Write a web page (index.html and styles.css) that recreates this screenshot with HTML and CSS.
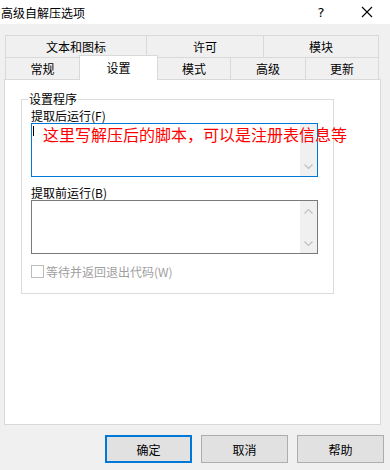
FILE: index.html
```html
<!DOCTYPE html>
<html lang="zh-CN">
<head>
    <meta charset="UTF-8">
    <title>高级自解压选项</title>
    <link rel="stylesheet" href="styles.css">
</head>
<body>
    <div class="titlebar">
        <span class="title">高级自解压选项</span>
        <span class="title-btn">?</span>
        <span class="title-btn">
            <svg width="12" height="12" viewBox="0 0 12 12">
                <path d="M1 1L11 11M11 1L1 11" stroke="#000" stroke-width="1.1" fill="none" />
            </svg>
        </span>
    </div>

    <div class="tabs">
        <div class="tab-row">
            <div class="tab w142">文本和图标</div>
            <div class="tab w118">许可</div>
            <div class="tab w116">模块</div>
        </div>
        <div class="tab-row">
            <div class="tab w75">常规</div>
            <div class="tab w79 active">设置</div>
            <div class="tab w74">模式</div>
            <div class="tab w76">高级</div>
            <div class="tab w74">更新</div>
        </div>
    </div>

    <div class="panel">
        <fieldset class="group">
            <legend>设置程序</legend>
            <div class="field-label">提取后运行(F)</div>
            <div class="textbox focused">
                <div class="text-area"><span class="caret"></span></div>
                <div class="scrollbar">
                    <svg width="9" height="5" viewBox="0 0 9 5"><path d="M0.5 4.5L4.5 0.5L8.5 4.5" stroke="#c2c2c2" stroke-width="1.2" fill="none" /></svg>
                    <svg width="9" height="5" viewBox="0 0 9 5"><path d="M0.5 0.5L4.5 4.5L8.5 0.5" stroke="#c2c2c2" stroke-width="1.2" fill="none" /></svg>
                </div>
                <span class="note">这里写解压后的脚本，可以是注册表信息等</span>
            </div>

            <div class="field-label second">提取前运行(B)</div>
            <div class="textbox">
                <div class="text-area"></div>
                <div class="scrollbar">
                    <svg width="9" height="5" viewBox="0 0 9 5"><path d="M0.5 4.5L4.5 0.5L8.5 4.5" stroke="#c2c2c2" stroke-width="1.2" fill="none" /></svg>
                    <svg width="9" height="5" viewBox="0 0 9 5"><path d="M0.5 0.5L4.5 4.5L8.5 0.5" stroke="#c2c2c2" stroke-width="1.2" fill="none" /></svg>
                </div>
            </div>

            <div class="check-row">
                <span class="checkbox"></span>
                <span class="check-label">等待并返回退出代码(W)</span>
            </div>
        </fieldset>
    </div>

    <footer>
        <button class="default">确定</button>
        <button>取消</button>
        <button>帮助</button>
    </footer>
</body>
</html>
```

FILE: styles.css
```css
* {
    box-sizing: border-box;
}

body {
    margin: 0;
    width: 390px;
    height: 470px;
    overflow: hidden;
    background-color: #f0f0f0;
    font-family: "Noto Sans CJK SC", sans-serif;
    font-size: 12px;
    color: #000;
}

.titlebar {
    display: flex;
    align-items: center;
    height: 24px;
    background-color: #fff;
}
.title {
    flex: 1;
    padding-left: 1px;
    font-size: 12px;
}
.title-btn {
    width: 46px;
    height: 24px;
    display: flex;
    justify-content: center;
    align-items: center;
    font-family: "DejaVu Sans", sans-serif;
    font-size: 13px;
}

.tabs {
    margin: 11px 0 0 5px;
}
.tab-row {
    display: flex;
    height: 22px;
}
.tab {
    height: 22px;
    margin-right: -1px;
    border: 1px solid #d9d9d9;
    border-bottom: none;
    background-color: #f0f0f0;
    display: flex;
    justify-content: center;
    align-items: center;
}
.tab.active {
    position: relative;
    z-index: 1;
    height: 25px;
    margin-top: -2px;
    padding-bottom: 2px;
    background-color: #fff;
}
.w142 { width: 142px; }
.w118 { width: 118px; }
.w116 { width: 116px; }
.w75 { width: 75px; }
.w79 { width: 79px; }
.w74 { width: 74px; }
.w76 { width: 76px; }

.panel {
    height: 346px;
    margin: 0 9px 0 4px;
    padding: 12px 0 0 16px;
    background-color: #fff;
    border: 1px solid #d9d9d9;
}

.group {
    width: 313px;
    height: 202px;
    margin: 0;
    padding: 3px 0 0 9px;
    border: 1px solid #dcdcdc;
}
.group legend {
    margin-left: -3px;
    padding: 0 1px;
    line-height: 14px;
}

.field-label {
    line-height: 14px;
}
.field-label.second {
    margin-top: 9px;
}

.textbox {
    position: relative;
    display: flex;
    width: 287px;
    height: 54px;
    border: 1px solid #7a7a7a;
    background-color: #fff;
}
.textbox.focused {
    border-color: #0078d7;
}
.text-area {
    flex: 1;
    padding: 2px 1px;
}
.caret {
    display: block;
    width: 1px;
    height: 10px;
    background-color: #000;
}
.scrollbar {
    width: 17px;
    padding: 8px 0 7px;
    background-color: #f0f0f0;
    display: flex;
    flex-direction: column;
    justify-content: space-between;
    align-items: center;
}
.note {
    position: absolute;
    left: 11px;
    top: 0;
    z-index: 2;
    white-space: nowrap;
    color: #ff0000;
    font-size: 16px;
    line-height: 20px;
}

.check-row {
    display: flex;
    align-items: center;
    gap: 2px;
    margin-top: 11px;
    height: 13px;
}
.checkbox {
    width: 13px;
    height: 13px;
    border: 1px solid #bcbcbc;
    background-color: #fff;
}
.check-label {
    color: #a0a0a0;
}

footer {
    display: flex;
    justify-content: flex-end;
    gap: 9px;
    padding: 10px 6px 0 0;
}
button {
    width: 87px;
    height: 28px;
    border: 1px solid #adadad;
    background-color: #e1e1e1;
    font-family: "Noto Sans CJK SC", sans-serif;
    font-size: 12px;
    color: #000;
}
button.default {
    border: 2px solid #0078d7;
}
```
